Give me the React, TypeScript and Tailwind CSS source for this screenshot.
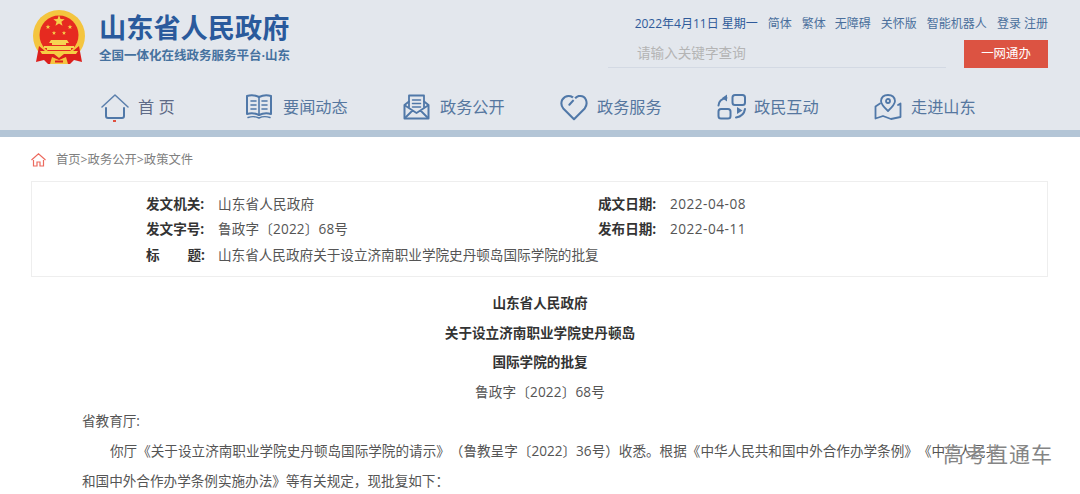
import React from "react";

const font = { fontFamily: '"Open Sans","Noto Sans CJK SC",sans-serif' };

function Star({ x, y, r }: { x: number; y: number; r: number }) {
  const pts = Array.from({ length: 10 }, (_, i) => {
    const a = -Math.PI / 2 + (i * Math.PI) / 5;
    const d = i % 2 === 0 ? r : r * 0.42;
    return `${x + d * Math.cos(a)},${y + d * Math.sin(a)}`;
  }).join(" ");
  return <polygon points={pts} fill="#f6d04a" />;
}

function Emblem() {
  return (
    <svg width="52" height="55" viewBox="0 0 52 55" className="shrink-0">
      <circle cx="26" cy="26" r="26" fill="#f4c53f" />
      <circle cx="26" cy="25" r="19.500" fill="#e62a20" />
      <path d="M6 36 L3 52 L11 50 L15 54 L37 54 L41 50 L49 52 L46 36 L40 41 H12 Z" fill="#dc1f1c" />
      <Star x={26} y={11} r={6} />
      <Star x={15} y={17} r={2.500} />
      <Star x={37} y={17} r={2.500} />
      <Star x={21} y={23} r={2.200} />
      <Star x={31} y={23} r={2.200} />
      <path d="M18 30 H34 L36 33 H16 Z M19 33 H33 V35 H19 Z M11 36 H41 V38 H11 Z M14 38 H38 V40 H14 Z" fill="#f6d452" />
      <path d="M7 41 H45 L43 44 H31 L26 48 L21 44 H9 Z" fill="#f6cd44" />
      <path d="M19 47 L26 50 L33 47 L35 54 H17 Z" fill="#f4c53f" />
      <path d="M22 50.500 H30 V52.500 H22 Z" fill="#dc1f1c" />
    </svg>
  );
}

const stroke = {
  fill: "none",
  stroke: "#5078a8",
  strokeWidth: 2,
  strokeLinecap: "round" as const,
  strokeLinejoin: "round" as const,
};

function HomeIcon() {
  return (
    <svg width="28" height="26" viewBox="0 0 28 26">
      <path d="M1 13 L14 1 L27 13" {...stroke} stroke="#5b7fac" strokeWidth={1.5} />
      <path d="M5 14 V22 Q5 24 7 24 H21 Q23 24 23 22 V14" {...stroke} />
    </svg>
  );
}
function BookIcon() {
  return (
    <svg width="26" height="26" viewBox="0 0 26 26" className="translate-y-[-1px]">
      <path d="M1 3 Q7 1 13 4 Q19 1 25 3 V21 Q19 19 13 22 Q7 19 1 21 Z" {...stroke} />
      <path d="M13 4 V22 M5 8 H10 M5 12 H10 M5 16 H10 M16 8 H21 M16 12 H21 M16 16 H21" {...stroke} strokeWidth={1.600} />
      <path d="M2 24.500 Q8 22.500 13 25 Q18 22.500 24 24.500" {...stroke} strokeWidth={1.400} />
    </svg>
  );
}
function MailIcon() {
  return (
    <svg width="27" height="26" viewBox="0 0 27 26">
      <path d="M1.500 11 V24.500 H25.500 V11 L21 7.500 M1.500 11 L6 7.500" {...stroke} />
      <path d="M6 13 V1.500 H21 V13" {...stroke} strokeWidth={1.800} />
      <path d="M9.500 6 H17.500 M9.500 9.500 H17.500 M9.500 13 H17.500" {...stroke} strokeWidth={1.500} />
      <path d="M2 11.500 L13.500 19 L25 11.500 M2 24 L9.500 16.500 M25 24 L17.500 16.500" {...stroke} strokeWidth={1.800} />
    </svg>
  );
}
function HeartIcon() {
  return (
    <svg width="28" height="27" viewBox="0 0 30 28">
      <path d="M15 26.500 L3.500 15 Q0 10.500 2.500 5.500 Q6 0.500 11.500 2 Q14 3 15.500 5 Q17.500 2.500 20 1.800 Q25.500 0.800 27.700 5.500 Q29.800 10.500 26.500 15 Z" {...stroke} strokeWidth={2.200} />
      <path d="M15.500 5 L10 11" {...stroke} strokeWidth={2.200} />
      <path d="M13.800 3.500 L16.800 6.500" stroke="#e3e7ed" strokeWidth={2.600} fill="none" />
    </svg>
  );
}
function SwapIcon() {
  return (
    <svg width="30" height="26" viewBox="0 0 30 26">
      <rect x="15.500" y="1" width="12.500" height="10" rx="2.500" {...stroke} />
      <rect x="1.500" y="15" width="12" height="9.500" rx="2.500" {...stroke} />
      <path d="M1.500 11.500 Q2 5 9.500 4" {...stroke} />
      <path d="M10 0.500 V7.500 L5 4 Z" fill="#5078a8" />
      <path d="M28 15 Q27 22 19 23.500" {...stroke} />
      <path d="M20 20 V13 L25.500 16.500 Z" fill="#5078a8" />
    </svg>
  );
}
function MapIcon() {
  return (
    <svg width="28" height="26" viewBox="0 0 28 26">
      <path d="M14 17 Q7 10.500 7 7 Q7.500 1 14 1 Q20.500 1 21 7 Q21 10.500 14 17 Z" {...stroke} strokeWidth={1.800} />
      <circle cx="14" cy="7" r="2" {...stroke} strokeWidth={1.800} />
      <path d="M6 9.500 L1.500 12.500 V24.500 L9 22 L17 25 L26.500 23 V9.500 L24 11" {...stroke} strokeWidth={1.800} />
    </svg>
  );
}

const nav = [
  { label: "首 页", Icon: HomeIcon, width: "w-[145px]", active: true },
  { label: "要闻动态", Icon: BookIcon, width: "w-[157px]", active: false },
  { label: "政务公开", Icon: MailIcon, width: "w-[157px]", active: false },
  { label: "政务服务", Icon: HeartIcon, width: "w-[157px]", active: false },
  { label: "政民互动", Icon: SwapIcon, width: "w-[157px]", active: false },
  { label: "走进山东", Icon: MapIcon, width: "w-[157px]", active: false },
];

function Meta({ label, value, digits }: { label: string; value: string; digits?: boolean }) {
  return (
    <div className="flex h-[25.500px] items-center">
      <span className="w-[72px] font-bold text-[#333]">{label}</span>
      <span className={digits ? "tracking-[0.5px] text-[#555]" : "tracking-[0.16px] text-[#555] [text-spacing-trim:space-all]"}>{value}</span>
    </div>
  );
}

export default function App() {
  return (
    <div style={font} className="relative h-[494px] w-[1080px] overflow-hidden bg-white text-[13.600px] text-[#555]">
      <header className="h-[137px] border-b-[7px] border-[#b3c5d6] bg-[#e3e7ed]">
        <div className="flex h-[90px] justify-between px-[32px]">
          <div className="flex pt-[10px]">
            <div className="ml-[1px]"><Emblem /></div>
            <div className="ml-[14px]">
              <div className="text-[27.200px] leading-[36px] font-bold text-[#2a5a9c]">山东省人民政府</div>
              <div className="mt-[2px] text-[12.500px] leading-[16px] font-bold text-[#45719f]">全国一体化在线政务服务平台·山东</div>
            </div>
          </div>
          <div className="w-[440px] pt-[15px]">
            <div className="flex justify-end gap-[10px] text-[12px] leading-[18px] text-[#4a6f9c]">
              <span className="text-[#2f5a9a]">2022年4月11日 星期一</span>
              <span>简体</span>
              <span className="-mr-[1px]">繁体</span>
              <span>无障碍</span>
              <span>关怀版</span>
              <span>智能机器人</span>
              <span>登录 注册</span>
            </div>
            <div className="mt-[7px] flex items-start justify-between">
              <div className="mt-[2px] h-[26px] w-[338px] border-b border-[#d3d9e3] pl-[29px] pt-[1px] text-[13.600px] leading-[20px] text-[#b4b4b4]">
                请输入关键字查询
              </div>
              <div className="flex h-[28px] w-[84px] items-center justify-center bg-[#dc5342] text-[12.400px] text-white">一网通办</div>
            </div>
          </div>
        </div>
        <nav className="flex h-[33px] pl-[101px] text-[16.200px]">
          {nav.map(({ label, Icon, width, active }) => (
            <div key={label} className={`relative flex h-[34px] items-center ${width}`}>
              <span className="flex w-[37px] shrink-0 items-center">
                <Icon />
              </span>
              <span className={active ? "text-[#5f6b87]" : "text-[#56779f]"}>{label}</span>
              {active && <span className="absolute left-[12px] top-[30px] h-[2px] w-[3px] bg-[#e0503f]" />}
            </div>
          ))}
        </nav>
      </header>

      <div className="flex h-[44px] items-center pl-[31px] pt-[2px] text-[12.300px] text-[#808080]">
        <svg width="15" height="14" viewBox="0 0 15 14" className="mr-[10px]">
          <path d="M0.500 7 L7.500 0.800 L14.500 7 M2.500 7 V13 H6 V9 H9 V13 H12.500 V7" fill="none" stroke="#ec6a5e" strokeWidth="1.200" />
        </svg>
        <span>首页&gt;政务公开&gt;政策文件</span>
      </div>

      <section className="ml-[31px] mr-[32px] h-[96px] border border-[#eeeeee] pl-[114px] pt-[9px]">
        <div className="grid grid-cols-[452px_1fr]">
          <Meta label="发文机关:" value="山东省人民政府" />
          <Meta label="成文日期:" value="2022-04-08" digits />
          <Meta label="发文字号:" value="鲁政字〔2022〕68号" />
          <Meta label="发布日期:" value="2022-04-11" digits />
          <div className="col-span-2">
            <div className="flex h-[25.500px] items-center">
              <span className="flex w-[59px] justify-between font-bold text-[#333]"><span>标</span><span>题:</span></span>
              <span className="ml-[13px] text-[#555]">山东省人民政府关于设立济南职业学院史丹顿岛国际学院的批复</span>
            </div>
          </div>
        </div>
      </section>

      <article className="pl-[82px] pr-[82px] pt-[11px] leading-[29.600px] text-[#555] [text-spacing-trim:space-all]">
        <div className="text-center font-bold text-[#333]">山东省人民政府</div>
        <div className="text-center font-bold text-[#333]">关于设立济南职业学院史丹顿岛</div>
        <div className="text-center font-bold text-[#333]">国际学院的批复</div>
        <div className="text-center tracking-[0.16px]">鲁政字〔2022〕68号</div>
        <p>省教育厅:</p>
        <p className="-mr-[8px] indent-[28px]">
          你厅《关于设立济南职业学院史丹顿岛国际学院的请示》（鲁教呈字〔2022〕36号）收悉。根据《中华人民共和国中外合作办学条例》《中华人民共和国中外合作办学条例实施办法》等有关规定，现批复如下：
        </p>
      </article>

      <div className="absolute left-[943px] top-[440px] text-[21px] leading-[28px] tracking-[1px] text-[#858585] [text-shadow:0_0_2px_#ffffff]">
        高考直通车
      </div>
    </div>
  );
}
